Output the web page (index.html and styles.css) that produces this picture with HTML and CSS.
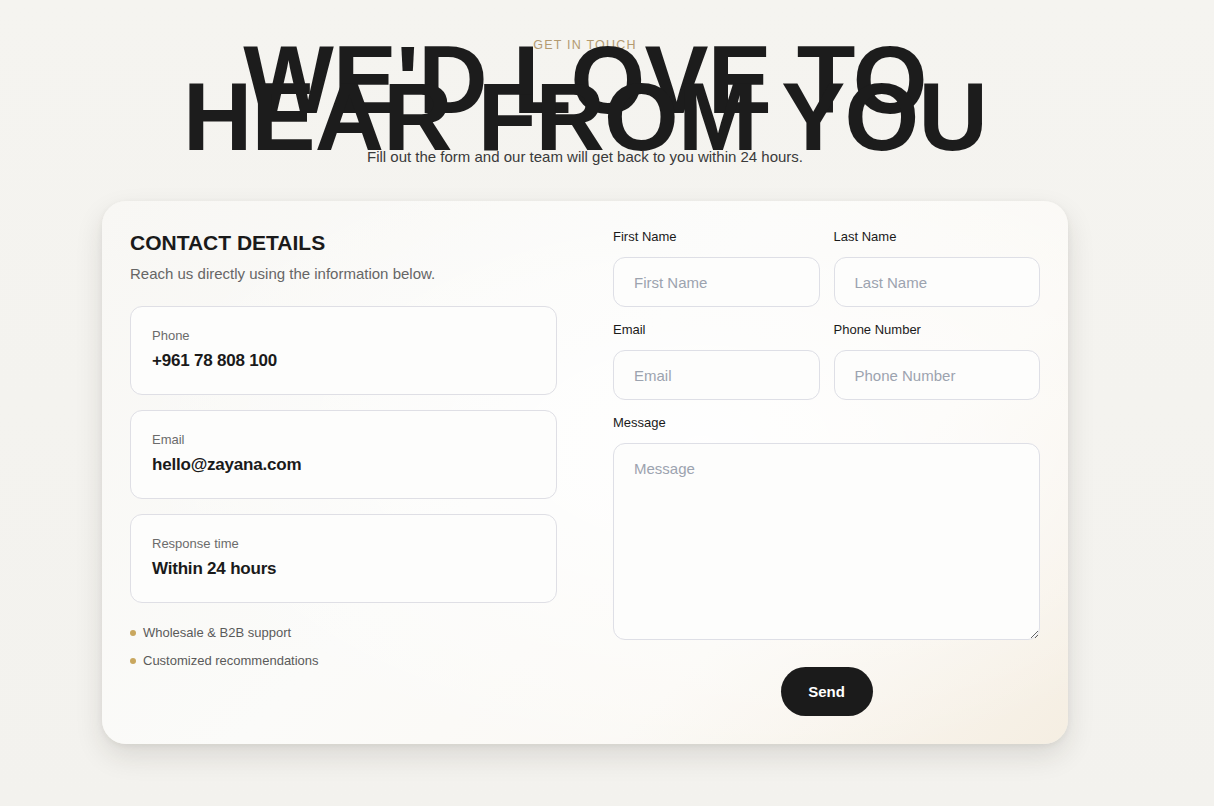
FILE: index.html
```html
<!DOCTYPE html>
<html lang="en">
<head>
<meta charset="utf-8">
<title>Contact</title>
<link rel="stylesheet" href="styles.css">
</head>
<body>
<main class="page">
  <header class="intro">
    <p class="eyebrow">GET IN TOUCH</p>
    <h1 class="headline">WE'D LOVE TO<br>HEAR FROM YOU</h1>
    <p class="lead">Fill out the form and our team will get back to you within 24 hours.</p>
  </header>

  <section class="card">
    <div class="details">
      <h2 class="details-title">CONTACT DETAILS</h2>
      <p class="details-sub">Reach us directly using the information below.</p>
      <div class="info-list">
        <div class="info">
          <span class="info-label">Phone</span>
          <span class="info-value">+961 78 808 100</span>
        </div>
        <div class="info">
          <span class="info-label">Email</span>
          <span class="info-value">hello@zayana.com</span>
        </div>
        <div class="info">
          <span class="info-label">Response time</span>
          <span class="info-value">Within 24 hours</span>
        </div>
      </div>
      <ul class="bullets">
        <li>Wholesale &amp; B2B support</li>
        <li>Customized recommendations</li>
      </ul>
    </div>

    <form class="form">
      <div class="grid">
        <label class="field">
          <span class="field-label">First Name</span>
          <input class="input" type="text" placeholder="First Name">
        </label>
        <label class="field">
          <span class="field-label">Last Name</span>
          <input class="input" type="text" placeholder="Last Name">
        </label>
        <label class="field">
          <span class="field-label">Email</span>
          <input class="input" type="email" placeholder="Email">
        </label>
        <label class="field">
          <span class="field-label">Phone Number</span>
          <input class="input" type="tel" placeholder="Phone Number">
        </label>
        <label class="field wide">
          <span class="field-label">Message</span>
          <textarea class="input textarea" placeholder="Message"></textarea>
        </label>
      </div>
      <div class="actions">
        <button class="send" type="button">Send</button>
      </div>
    </form>
  </section>
</main>
</body>
</html>
```

FILE: styles.css
```css
* { box-sizing: border-box; }

html, body {
  margin: 0;
  padding: 0;
}

body {
  font-family: "Liberation Sans", Arial, sans-serif;
  color: #1b1b1b;
  background: linear-gradient(180deg, #f5f4f0 0%, #f3f2ee 100%);
  min-height: 806px;
}

.page {
  width: 966px;
  margin-left: 102px;
  padding-top: 37px;
}

.intro {
  text-align: center;
}

.eyebrow {
  margin: 0;
  font-size: 12.5px;
  line-height: 16px;
  letter-spacing: 1.2px;
  color: #b39a70;
}

.headline {
  margin: 8px 0 0;
  font-size: 96px;
  line-height: 37px;
  font-weight: 700;
  letter-spacing: -0.8px;
  color: #1c1c1c;
  position: relative;
}

.lead {
  margin: 11px 0 0;
  font-size: 15px;
  line-height: 22px;
  color: #3a3a3a;
  position: relative;
}

.card {
  margin-top: 33px;
  border-radius: 24px;
  padding: 28px;
  display: grid;
  grid-template-columns: minmax(0, 1fr) minmax(0, 1fr);
  column-gap: 56px;
  background:
    radial-gradient(ellipse 60% 60% at 62% 45%, rgba(255,255,255,0.9) 0%, rgba(255,255,255,0) 100%),
    linear-gradient(135deg, #f8f7f4 0%, #fbfbf9 45%, #fbf9f5 70%, #f5eee2 100%);
  box-shadow: 0 12px 28px rgba(40, 35, 25, 0.12), 0 2px 6px rgba(40, 35, 25, 0.06);
}

.details-title {
  margin: 0;
  font-size: 21px;
  line-height: 28px;
  font-weight: 700;
  color: #1a1a1a;
}

.details-sub {
  margin: 6px 0 0;
  font-size: 15px;
  line-height: 22px;
  color: #666;
}

.info-list {
  margin-top: 21px;
  display: flex;
  flex-direction: column;
  gap: 15px;
}

.info {
  display: flex;
  flex-direction: column;
  padding: 21px 21px 22px;
  border: 1px solid #dfdfe5;
  border-radius: 12px;
  background: #fdfdfc;
}

.info-label {
  font-size: 13px;
  line-height: 16px;
  color: #6b6b6b;
}

.info-value {
  margin-top: 6px;
  font-size: 17px;
  line-height: 22px;
  font-weight: 700;
  letter-spacing: -0.2px;
  color: #1a1a1a;
}

.bullets {
  list-style: none;
  margin: 20px 0 0;
  padding: 0;
  display: flex;
  flex-direction: column;
  gap: 8px;
}

.bullets li {
  display: flex;
  align-items: center;
  gap: 7px;
  font-size: 13px;
  line-height: 20px;
  color: #5a5a5a;
}

.bullets li::before {
  content: "";
  width: 6px;
  height: 6px;
  border-radius: 50%;
  background: #c9a75e;
  flex: none;
}

.form {
  display: flex;
  flex-direction: column;
  min-width: 0;
}

.grid {
  display: grid;
  grid-template-columns: minmax(0, 1fr) minmax(0, 1fr);
  column-gap: 14px;
  row-gap: 15px;
}

.field {
  display: flex;
  flex-direction: column;
  min-width: 0;
}

.field.wide {
  grid-column: 1 / -1;
}

.field-label {
  font-size: 13px;
  line-height: 16px;
  margin-bottom: 12px;
  color: #1a1a1a;
}

.input {
  width: 100%;
  min-width: 0;
  height: 50px;
  border: 1px solid #dedfe6;
  border-radius: 12px;
  background: #fdfdfc;
  padding: 0 20px;
  font-family: "Liberation Sans", Arial, sans-serif;
  font-size: 15px;
  color: #1a1a1a;
  outline: none;
}

.input::placeholder {
  color: #9ca3af;
}

.textarea {
  height: 197px;
  padding: 16px 20px;
  line-height: 18px;
  resize: vertical;
  display: block;
}

.actions {
  display: flex;
  justify-content: center;
  margin-top: 27px;
}

.send {
  width: 92px;
  height: 49px;
  border: none;
  border-radius: 999px;
  background: #1b1b1b;
  color: #fff;
  font-family: "Liberation Sans", Arial, sans-serif;
  font-weight: 700;
  font-size: 15px;
  cursor: pointer;
}
```
